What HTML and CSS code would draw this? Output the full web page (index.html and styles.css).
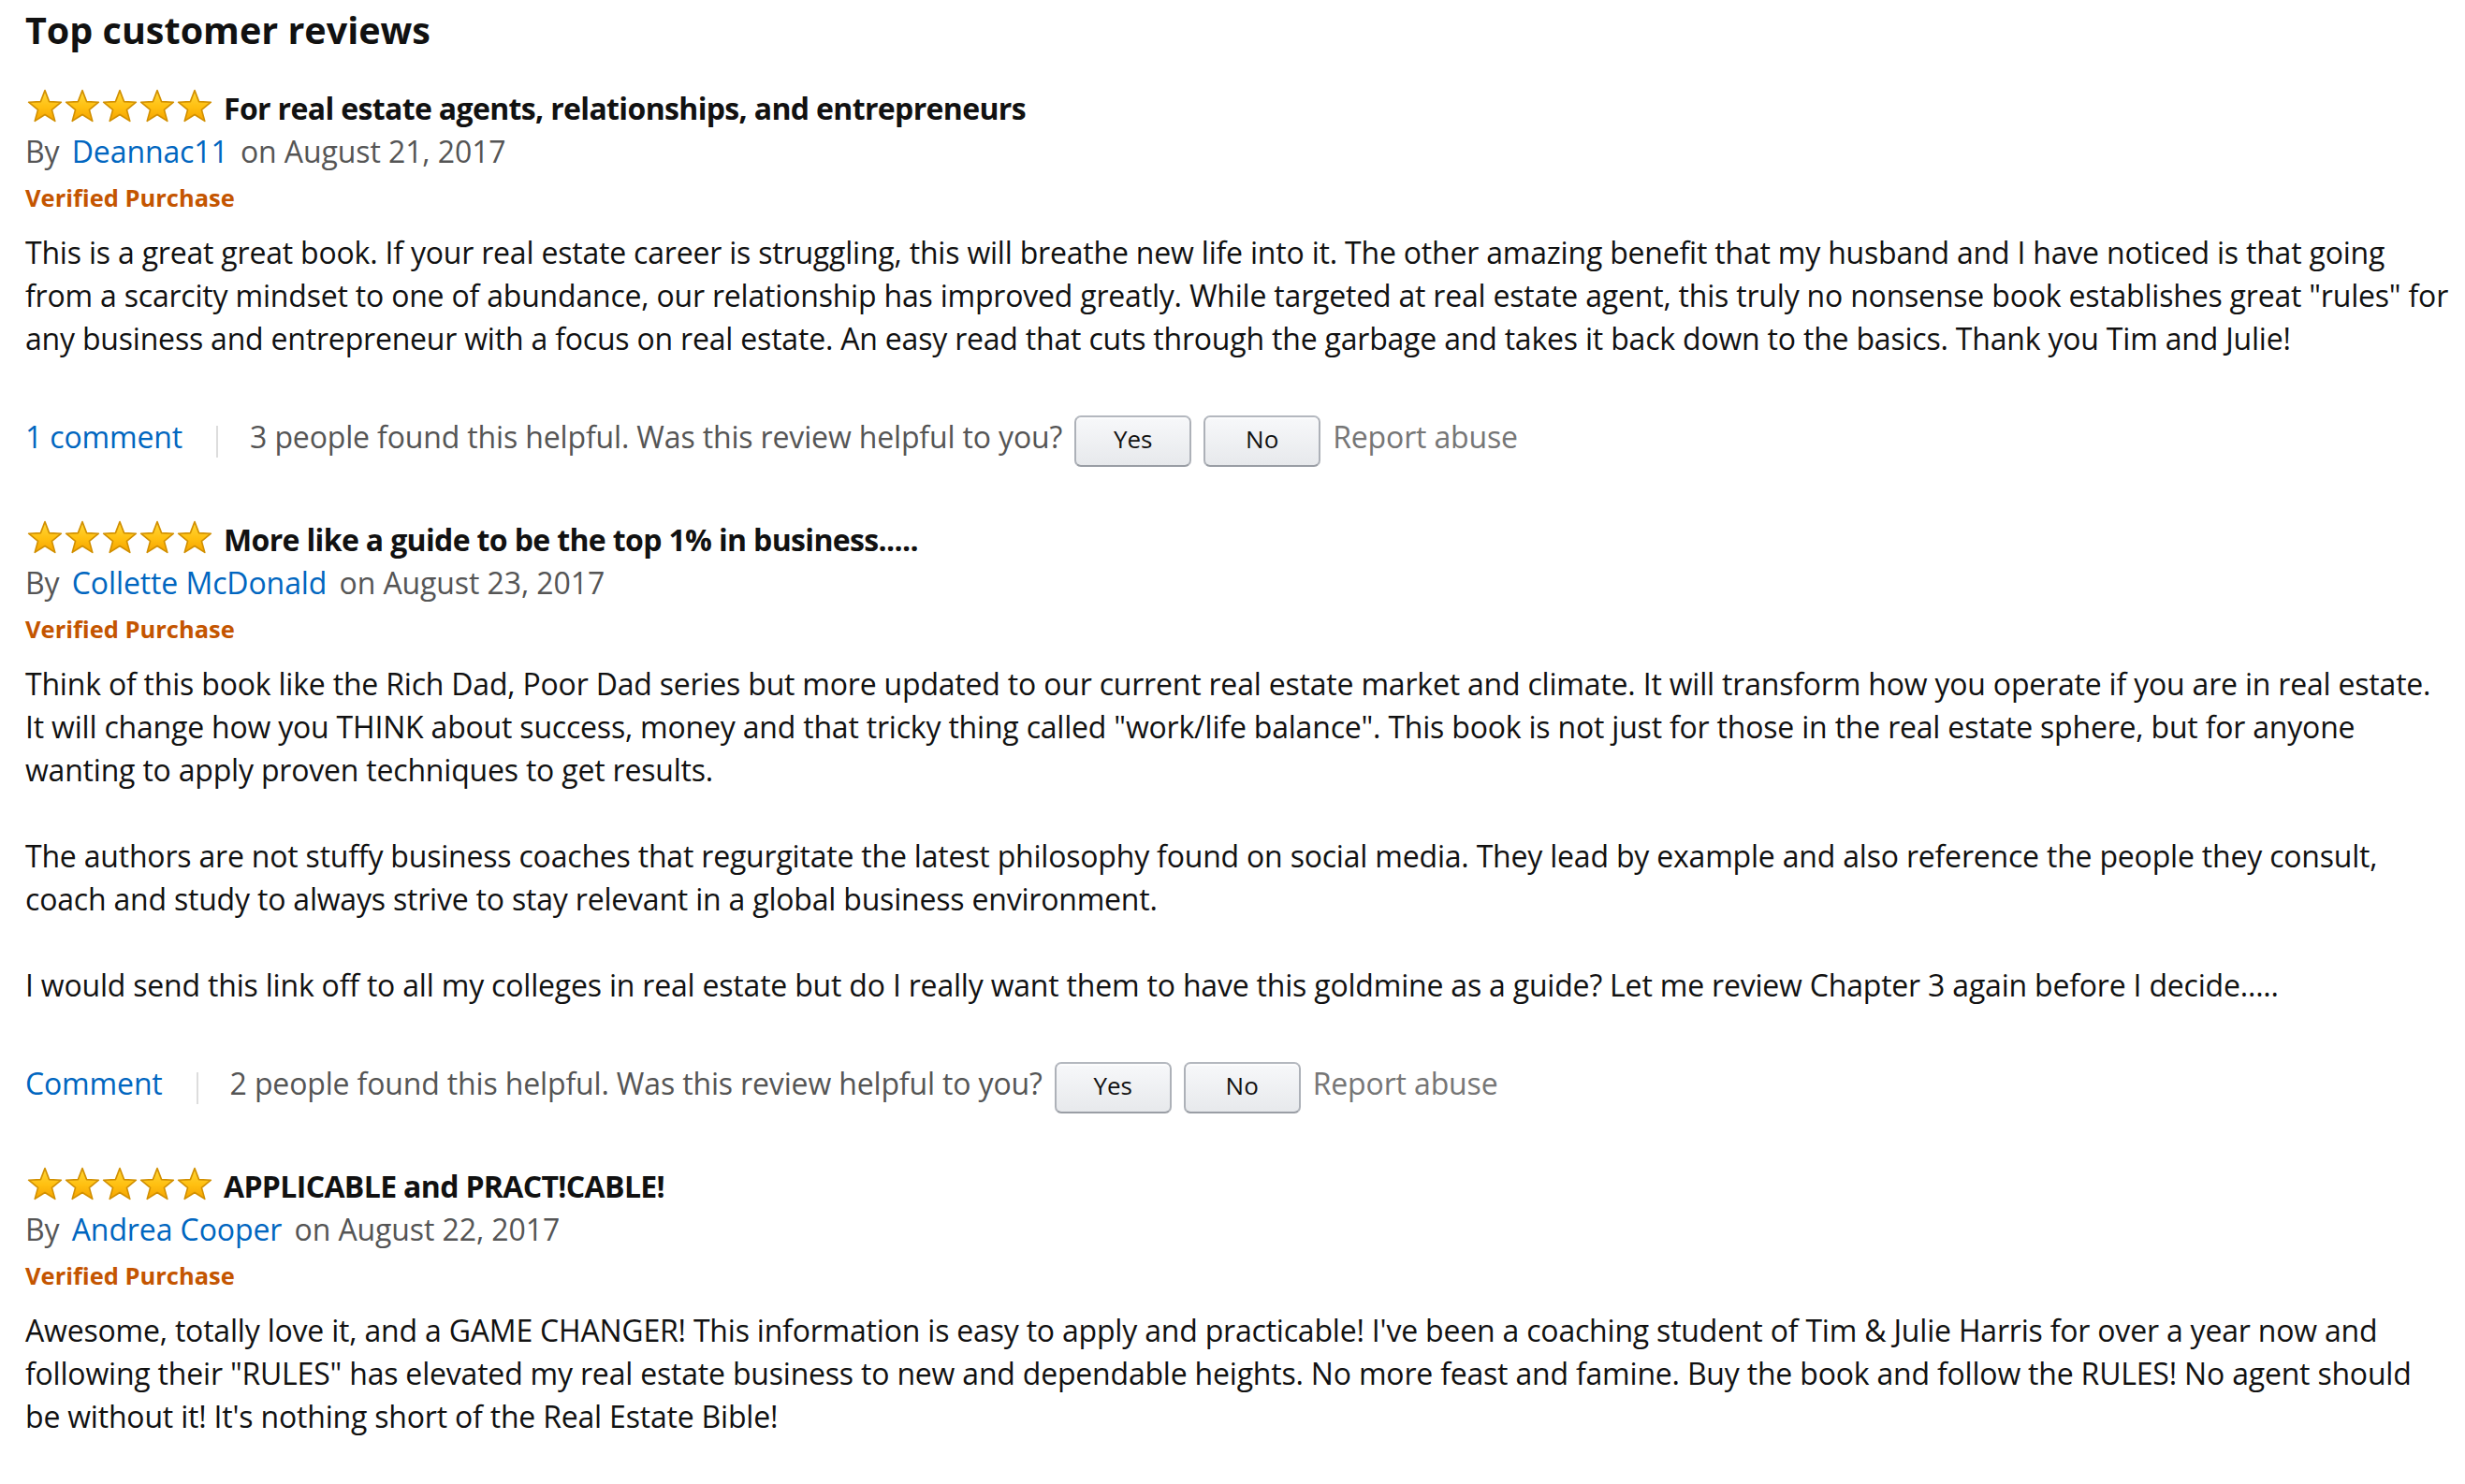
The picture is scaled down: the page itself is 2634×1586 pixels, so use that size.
FILE: index.html
```
<!DOCTYPE html>
<html lang="en">
<head>
<meta charset="utf-8">
<title>Top customer reviews</title>
<link rel="stylesheet" href="styles.css">
</head>
<body>
<svg class="defs" width="0" height="0" aria-hidden="true">
  <defs>
    <linearGradient id="starFill" x1="0" y1="0" x2="0" y2="1">
      <stop offset="0" stop-color="#ffd83a"/>
      <stop offset="0.55" stop-color="#ffbf10"/>
      <stop offset="1" stop-color="#f5a300"/>
    </linearGradient>
    <symbol id="star" viewBox="0 0 40 36">
      <polygon points="20,1.6 24.6,13.6 37.4,14.2 27.4,22.3 30.8,34.4 20,27.5 9.2,34.4 12.6,22.3 2.6,14.2 15.4,13.6" fill="url(#starFill)" stroke="#d18f00" stroke-width="1.6" stroke-linejoin="round"/>
    </symbol>
  </defs>
</svg>

<main class="page">
  <h2 class="heading">Top customer reviews</h2>

  <section class="reviews">
    <article class="review">
      <div class="review-title-row">
        <svg class="stars" width="200" height="36" viewBox="0 0 200 36" role="img" aria-label="5.0 out of 5 stars">
          <use href="#star" x="0" width="40" height="36"/>
          <use href="#star" x="40" width="40" height="36"/>
          <use href="#star" x="80" width="40" height="36"/>
          <use href="#star" x="120" width="40" height="36"/>
          <use href="#star" x="160" width="40" height="36"/>
        </svg>
        <span class="review-title">For real estate agents, relationships, and entrepreneurs</span>
      </div>
      <div class="byline">By <a class="author" href="#">Deannac11</a> on August 21, 2017</div>
      <div class="verified">Verified Purchase</div>
      <div class="review-body">
        <p>This is a great great book. If your real estate career is struggling, this will breathe new life into it. The other amazing benefit that my husband and I have noticed is that going from a scarcity mindset to one of abundance, our relationship has improved greatly. While targeted at real estate agent, this truly no nonsense book establishes great "rules" for any business and entrepreneur with a focus on real estate. An easy read that cuts through the garbage and takes it back down to the basics. Thank you Tim and Julie!</p>
      </div>
      <div class="actions">
        <a class="comment-link" href="#">1 comment</a>
        <span class="sep"></span>
        <span class="helpful">3 people found this helpful. Was this review helpful to you?</span>
        <button class="vote" type="button">Yes</button>
        <button class="vote" type="button">No</button>
        <a class="report" href="#">Report abuse</a>
      </div>
    </article>

    <article class="review">
      <div class="review-title-row">
        <svg class="stars" width="200" height="36" viewBox="0 0 200 36" role="img" aria-label="5.0 out of 5 stars">
          <use href="#star" x="0" width="40" height="36"/>
          <use href="#star" x="40" width="40" height="36"/>
          <use href="#star" x="80" width="40" height="36"/>
          <use href="#star" x="120" width="40" height="36"/>
          <use href="#star" x="160" width="40" height="36"/>
        </svg>
        <span class="review-title">More like a guide to be the top 1% in business.....</span>
      </div>
      <div class="byline">By <a class="author" href="#">Collette McDonald</a> on August 23, 2017</div>
      <div class="verified">Verified Purchase</div>
      <div class="review-body">
        <p>Think of this book like the Rich Dad, Poor Dad series but more updated to our current real estate market and climate. It will transform how you operate if you are in real estate. It will change how you THINK about success, money and that tricky thing called "work/life balance". This book is not just for those in the real estate sphere, but for anyone wanting to apply proven techniques to get results.</p>
        <p>The authors are not stuffy business coaches that regurgitate the latest philosophy found on social media. They lead by example and also reference the people they consult, coach and study to always strive to stay relevant in a global business environment.</p>
        <p>I would send this link off to all my colleges in real estate but do I really want them to have this goldmine as a guide? Let me review Chapter 3 again before I decide.....</p>
      </div>
      <div class="actions">
        <a class="comment-link" href="#">Comment</a>
        <span class="sep"></span>
        <span class="helpful">2 people found this helpful. Was this review helpful to you?</span>
        <button class="vote" type="button">Yes</button>
        <button class="vote" type="button">No</button>
        <a class="report" href="#">Report abuse</a>
      </div>
    </article>

    <article class="review">
      <div class="review-title-row">
        <svg class="stars" width="200" height="36" viewBox="0 0 200 36" role="img" aria-label="5.0 out of 5 stars">
          <use href="#star" x="0" width="40" height="36"/>
          <use href="#star" x="40" width="40" height="36"/>
          <use href="#star" x="80" width="40" height="36"/>
          <use href="#star" x="120" width="40" height="36"/>
          <use href="#star" x="160" width="40" height="36"/>
        </svg>
        <span class="review-title">APPLICABLE and PRACT!CABLE!</span>
      </div>
      <div class="byline">By <a class="author" href="#">Andrea Cooper</a> on August 22, 2017</div>
      <div class="verified">Verified Purchase</div>
      <div class="review-body">
        <p>Awesome, totally love it, and a GAME CHANGER! This information is easy to apply and practicable! I've been a coaching student of Tim &amp; Julie Harris for over a year now and following their "RULES" has elevated my real estate business to new and dependable heights. No more feast and famine. Buy the book and follow the RULES! No agent should be without it! It's nothing short of the Real Estate Bible!</p>
      </div>
    </article>
  </section>
</main>
</body>
</html>
```
FILE: styles.css
```
html, body {
  margin: 0;
  padding: 0;
  background: #ffffff;
}

body {
  font-family: "Open Sans", "Noto Sans", sans-serif;
  color: #111111;
  font-size: 32px;
  line-height: 46px;
}

.defs {
  position: absolute;
  width: 0;
  height: 0;
  overflow: hidden;
}

.page {
  padding: 7px 15px 0 27px;
}

.heading {
  margin: 0;
  font-size: 39.5px;
  line-height: 50px;
  font-weight: 700;
  color: #111111;
}

.reviews {
  margin-top: 36px;
}

.review + .review {
  margin-top: 55px;
}

.review-title-row {
  display: flex;
  align-items: flex-start;
  height: 46px;
}

.stars {
  flex: none;
  margin: 2px 11px 0 1px;
}

.review-title {
  font-weight: 700;
  letter-spacing: -0.65px;
  color: #111111;
  white-space: nowrap;
}

.byline {
  color: #555555;
  letter-spacing: -0.1px;
}

.author {
  color: #0066c0;
  text-decoration: none;
  margin: 0 5px;
}

.verified {
  margin-top: 8px;
  font-size: 25.5px;
  line-height: 36px;
  font-weight: 700;
  color: #c45500;
}

.review-body {
  margin-top: 18px;
  letter-spacing: -0.2px;
}

.review-body p {
  margin: 0 0 46px 0;
}

.review-body p:last-child {
  margin-bottom: 0;
}

.actions {
  margin-top: 59px;
  display: flex;
  align-items: baseline;
  letter-spacing: -0.15px;
}

.comment-link {
  color: #0066c0;
  text-decoration: none;
}

.sep {
  align-self: center;
  width: 2px;
  height: 34px;
  margin: 0 34px 0 36px;
  background: #dddddd;
}

.helpful {
  color: #555555;
}

.vote {
  box-sizing: border-box;
  width: 125px;
  height: 55px;
  margin: 0 0 0 13px;
  padding: 0 0 4px 0;
  font-family: "Open Sans", "Noto Sans", sans-serif;
  font-size: 26px;
  line-height: 47px;
  color: #111111;
  border: 2px solid #adb1b8;
  border-color: #b4b8bf #adb1b8 #9a9ea5;
  border-radius: 7px;
  background: linear-gradient(to bottom, #f7f8fa, #e7e9ec);
  box-shadow: inset 0 2px 0 rgba(255, 255, 255, 0.6);
  cursor: pointer;
}

.report {
  margin-left: 13px;
  color: #767676;
  text-decoration: none;
}
```
